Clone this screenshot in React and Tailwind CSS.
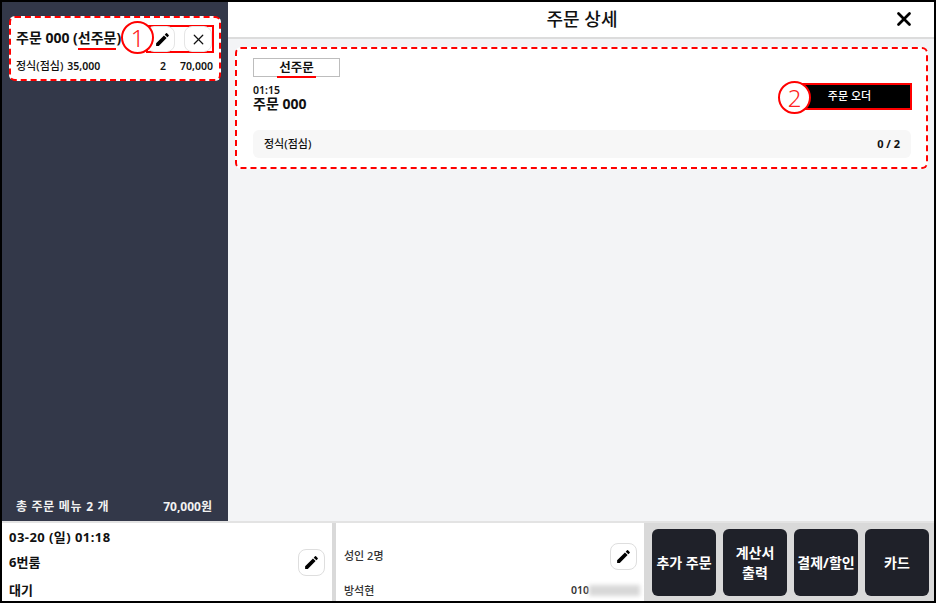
import React from 'react';
import { X } from 'lucide-react';

const font = { fontFamily: '"Noto Sans", "Noto Sans CJK KR", sans-serif' };

const Pencil = ({ size = 16 }) => (
  <svg width={size} height={size} viewBox="0 0 24 24" fill="#000">
    <path d="M3 17.25V21h3.75L17.81 9.94l-3.75-3.75L3 17.25zM20.71 7.04a1 1 0 0 0 0-1.41l-2.34-2.34a1 1 0 0 0-1.41 0l-1.83 1.83 3.75 3.75 1.83-1.83z" />
  </svg>
);

const Marker = ({ n, className }) => (
  <div className={`absolute w-[33px] h-[33px] rounded-full border-2 border-[#ff0000] bg-white flex items-center justify-center text-[24px] font-light text-[#ff2020] ${className}`}>
    {n}
  </div>
);

const ActionButton = ({ children }) => (
  <button className="w-[64px] h-[67px] rounded-md bg-[#1f2129] text-white text-[14px] font-bold leading-[20px] flex items-center justify-center text-center whitespace-nowrap">
    {children}
  </button>
);

const App = () => {
  return (
    <div style={font} className="w-[936px] h-[603px] bg-white overflow-hidden">
      <div className="w-[936px] h-[603px] border-2 border-black flex flex-col overflow-hidden text-[#111]">
        {/* top part */}
        <div className="flex h-[519px] shrink-0">
          {/* left list */}
          <div className="w-[226px] shrink-0 bg-[#333849] flex flex-col justify-between">
            <div className="relative mt-[14px] ml-[7px] w-[212px] h-[65px] bg-white rounded-md border-2 border-dashed border-[#ff0000] pl-[5px] pr-[6px]">
              <div className="flex items-center h-[39px] pt-[0px]">
                <span className="text-[14px] font-bold whitespace-nowrap">
                  주문 000 (<span className="border-b-2 border-[#ff0000] pb-px">선주문</span>)
                </span>
              </div>
              <div className="flex items-center text-[10.5px] font-semibold mt-[2px] leading-[14px]">
                <span className="text-[11px] font-medium">정식(점심)</span>
                <span className="ml-[4px]">35,000</span>
                <span className="ml-auto">2</span>
                <span className="w-[47px] text-right">70,000</span>
              </div>
              <div className="absolute left-[135px] top-[7px] w-[68px] h-[28px] border-2 border-[#ff0000] flex justify-between items-center">
                <div className="w-[29px] h-[26px] rounded-lg border border-[#e5e5e5] flex items-center justify-center -ml-[2px] pl-[4px]">
                  <Pencil size={17} />
                </div>
                <div className="w-[28px] h-[26px] rounded-lg border border-[#e5e5e5] flex items-center justify-center">
                  <X size={17} strokeWidth={1.75} color="#111" />
                </div>
              </div>
              <Marker n="1" className="left-[110px] top-[3px]" />
            </div>
            <div className="flex justify-between pl-[14px] pr-[16px] pb-[5px] text-[12px] font-bold text-[#f1f1f1]">
              <span className="tracking-[0.7px]">총 주문 메뉴 2 개</span>
              <span>70,000원</span>
            </div>
          </div>

          {/* detail */}
          <div className="flex-1 bg-[#f3f4f6] flex flex-col">
            <div className="relative h-[37px] shrink-0 bg-white border-b-2 border-[#dcdcdc] flex items-center justify-center text-[18px] font-medium pl-[2px] pb-[1px]">
              주문 상세
              <X size={22} strokeWidth={3} color="#000" className="absolute right-[19px] top-[6px]" />
            </div>
            <div className="relative mt-[8px] ml-[7px] w-[693px] h-[122px] bg-white rounded-md border-2 border-dashed border-[#ff0000] pl-[16px] pr-[15px] pt-[9px]">
              <div className="w-[87px] h-[19px] border border-[#bdbdbd] flex items-center justify-center text-[12.5px] font-bold">
                <span className="border-b-2 border-[#ff0000] leading-[17px] px-[2px] translate-y-[1px]">선주문</span>
              </div>
              <div className="text-[10.5px] font-semibold leading-[12px] mt-[7px]">01:15</div>
              <div className="text-[14px] font-bold leading-[15px]">주문 000</div>
              <div className="mt-[19px] h-[28px] bg-[#f7f7f7] rounded-md flex items-center justify-between pl-[11px] pr-[11px] text-[11px]">
                <span className="font-medium">정식(점심)</span>
                <span className="font-bold">0 / 2</span>
              </div>
              <button className="absolute left-[563px] top-[34px] w-[112px] h-[27px] bg-black border-2 border-[#ff0000] text-white text-[11px] font-medium pr-[13px] flex items-center justify-center">
                주문 오더
              </button>
              <Marker n="2" className="left-[541px] top-[32px]" />
            </div>
          </div>
        </div>

        {/* bottom bar */}
        <div className="flex-1 flex border-t-2 border-[#e3e3e3] min-h-0">
          <div className="relative w-[334px] shrink-0 border-r-4 border-[#d9d9d9] bg-white pl-[7px] pt-[6px] text-[13px] font-bold">
            <div className="leading-[17px] tracking-[0.45px]">03-20 (일) 01:18</div>
            <div className="leading-[17px] mt-[8px]">6번룸</div>
            <div className="leading-[17px] mt-[11px]">대기</div>
            <div className="absolute right-[7px] top-[26px] w-[27px] h-[27px] rounded-lg border border-[#dedede] flex items-center justify-center">
              <Pencil size={17} />
            </div>
          </div>
          <div className="relative w-[308px] shrink-0 bg-white text-[11px] text-[#333]">
            <div className="absolute left-[8px] top-[25px] font-medium">성인 2명</div>
            <div className="absolute right-[7px] top-[20px] w-[27px] h-[27px] rounded-lg border border-[#dedede] flex items-center justify-center">
              <Pencil size={17} />
            </div>
            <div className="absolute left-[8px] top-[60px] font-medium">방석현</div>
            <div className="absolute right-[4px] top-[60px] flex items-center font-semibold text-[10.5px]">
              <span>010</span>
              <span className="w-[51px] h-[11px] bg-[#d8d8d8] blur-[2px]"></span>
            </div>
          </div>
          <div className="flex-1 bg-[#d9d9d9] flex gap-[7px] pl-[8px] pt-[6px]">
            <ActionButton>추가 주문</ActionButton>
            <ActionButton>계산서<br />출력</ActionButton>
            <ActionButton>결제/할인</ActionButton>
            <ActionButton>카드</ActionButton>
          </div>
        </div>
      </div>
    </div>
  );
};

export default App;
